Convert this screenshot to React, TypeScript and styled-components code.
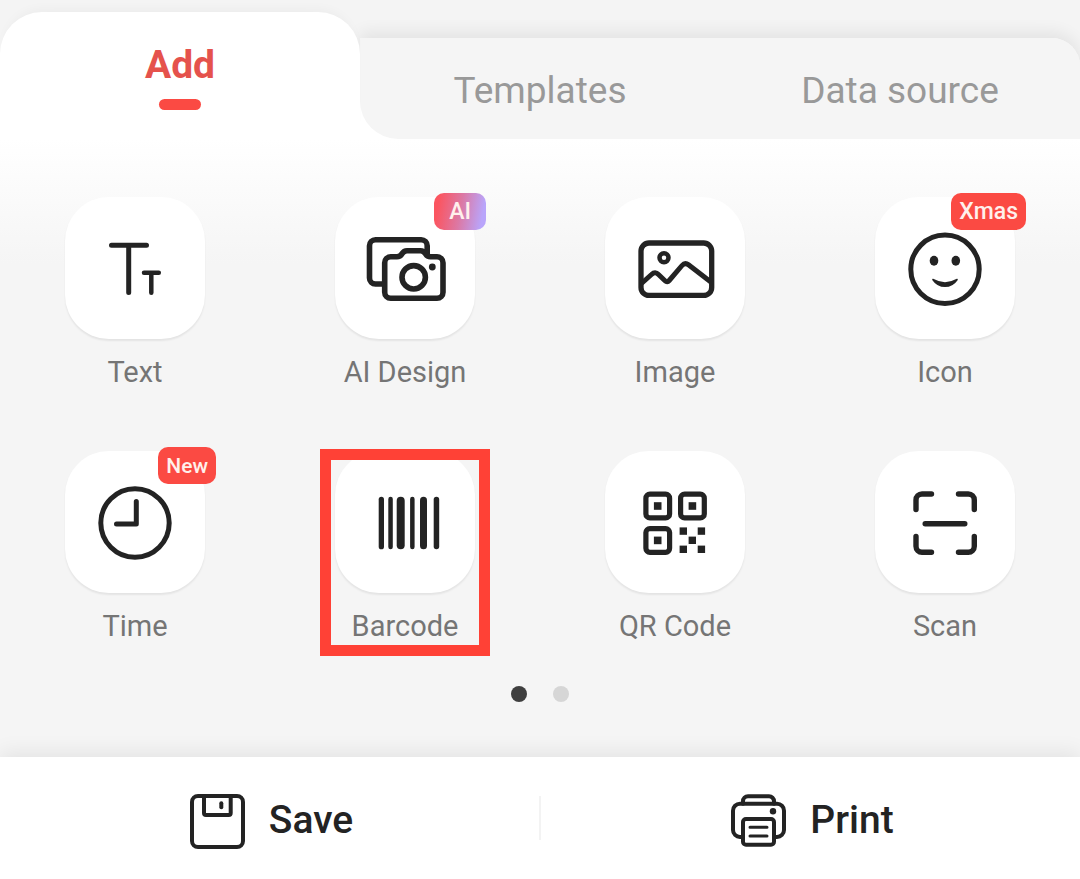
import React, { useState } from "react";
import styled, { createGlobalStyle, css } from "styled-components";

const ink = "#232323";
const surface = "#f5f5f5";
const accent = "#fb4a43";

const GlobalStyle = createGlobalStyle`
  *, *::before, *::after { box-sizing: border-box; }
  body {
    margin: 0;
    background: ${surface};
    font-family: Roboto, "Liberation Sans", sans-serif;
  }
  button {
    margin: 0;
    padding: 0;
    border: 0;
    background: none;
    font: inherit;
    color: inherit;
    cursor: pointer;
  }
`;

const Page = styled.div`
  display: flex;
  flex-direction: column;
  min-height: 100vh;
`;

const TabBar = styled.nav`
  display: grid;
  grid-template-columns: 1fr 2fr;
  background: #f4f4f4;
`;

const ActiveTab = styled.button`
  position: relative;
  z-index: 1;
  display: flex;
  flex-direction: column;
  align-items: center;
  gap: 12px;
  margin-top: 12px;
  padding: 31px 0 29px;
  border-radius: 42px 42px 0 0;
  background: #fff;
  box-shadow: 0 -8px 12px -6px rgba(0, 0, 0, 0.04);
  color: #e5524c;
  font-size: 39px;
  font-weight: 700;
  line-height: 44px;

  &::after {
    content: "";
    width: 42px;
    height: 11px;
    border-radius: 6px;
    background: ${accent};
  }
`;

const InactiveBacking = styled.div`
  margin-top: 38px;
  border-radius: 0 28px 0 0;
  background: linear-gradient(${surface} 50%, #fff 50%);
  box-shadow: 0 -6px 16px rgba(0, 0, 0, 0.07);
`;

const InactiveTabs = styled.div`
  display: grid;
  grid-template-columns: 1fr 1fr;
  height: 100%;
  border-radius: 0 28px 0 38px;
  background: ${surface};
`;

const InactiveTab = styled.button`
  padding-top: 4px;
  color: #999;
  font-size: 37px;
  line-height: 44px;
`;

const Panel = styled.main`
  position: relative;
  z-index: 1;
  flex: 1;
  display: flex;
  flex-direction: column;
  align-items: center;
  gap: 43px;
  padding: 58px 0 55px;
  background: linear-gradient(#fff 0, ${surface} 125px);
`;

const ToolGrid = styled.div`
  display: grid;
  grid-template-columns: repeat(4, 1fr);
  row-gap: 62px;
  justify-items: center;
  width: 100%;
`;

const Tool = styled.button<{ $framed?: boolean }>`
  position: relative;
  display: flex;
  flex-direction: column;
  align-items: center;
  gap: 16px;
  width: 140px;

  ${(p) =>
    p.$framed &&
    css`
      &::after {
        content: "";
        position: absolute;
        inset: -2px -15px -13px;
        border: 11px solid #ff4136;
      }
    `}
`;

const Tile = styled.span`
  display: flex;
  align-items: center;
  justify-content: center;
  width: 140px;
  height: 142px;
  padding-top: 2px;
  border-radius: 44px;
  background: #fff;
  box-shadow: 0 2px 2px rgba(0, 0, 0, 0.07);
`;

const ToolLabel = styled.span`
  color: #757575;
  font-size: 29px;
  line-height: 34px;
  white-space: nowrap;
`;

const Badge = styled.span<{ $gradient?: boolean; $small?: boolean }>`
  position: absolute;
  top: -4px;
  right: -11px;
  padding: 1px ${(p) => (p.$gradient ? 15 : 8)}px 0;
  border-radius: 10px;
  background: ${(p) =>
    p.$gradient ? "linear-gradient(100deg, #fb5560 10%, #dc78a4 50%, #b9a5fb 90%)" : accent};
  color: #fff0ec;
  font-size: ${(p) => (p.$small ? 21 : 23)}px;
  font-weight: 500;
  line-height: 36px;
`;

const Dots = styled.div`
  display: flex;
  gap: 26px;
`;

const Dot = styled.button<{ $on?: boolean }>`
  width: 16px;
  height: 16px;
  border-radius: 50%;
  background: ${(p) => (p.$on ? "#3f3f3f" : "#d6d6d6")};
`;

const ActionBar = styled.footer`
  position: relative;
  z-index: 2;
  display: grid;
  grid-template-columns: 1fr 2px 1fr;
  align-items: center;
  background: #fff;
  box-shadow: 0 -4px 20px rgba(0, 0, 0, 0.08);
`;

const Divider = styled.span`
  height: 44px;
  background: #f3f3f3;
`;

const Action = styled.button`
  display: flex;
  align-items: flex-start;
  justify-content: center;
  gap: 23px;
  padding: 36px 0 30px 4px;
  color: ${ink};
  font-size: 39px;
  font-weight: 500;
  line-height: 54px;
`;

const Glyph = styled.svg`
  display: block;
  fill: none;
  stroke: ${ink};
  stroke-width: 5;
  stroke-linecap: round;
  stroke-linejoin: round;

  .solid {
    fill: ${ink};
    stroke: none;
  }
`;

const ToolGlyph = ({ children }: { children: React.ReactNode }) => (
  <Glyph width="100" height="100" viewBox="0 0 100 100" aria-hidden="true">
    {children}
  </Glyph>
);

const TextIcon = () => (
  <ToolGlyph>
    <path d="M26.5 26.3H61.5M43.7 26.3V73.5" />
    <path d="M59 53.7H73.8M66.3 53.7V73.8" strokeWidth="4.5" />
  </ToolGlyph>
);

const CameraIcon = () => (
  <ToolGlyph>
    <g strokeWidth="5.6">
      <path d="M29 65H20.5a6 6 0 0 1-6-6V26.7a6 6 0 0 1 6-6H66.2a6 6 0 0 1 6 6V35" />
      <path d="M35.7 37.8H42c2.6 0 3.6-.7 5-3c1.4-2.3 2.6-3.1 5-3.1H65.5c2.4 0 3.6.8 5 3.1c1.4 2.3 2.4 3 5 3H82a6 6 0 0 1 6 6V73.3a6 6 0 0 1-6 6H35.7a6 6 0 0 1-6-6V43.8a6 6 0 0 1 6-6Z" />
      <circle cx="58.7" cy="58.3" r="11.7" />
    </g>
    <circle className="solid" cx="77.3" cy="48" r="3.4" />
  </ToolGlyph>
);

const ImageIcon = () => (
  <ToolGlyph>
    <rect x="16" y="24" width="70.7" height="52.4" rx="8" strokeWidth="5.3" />
    <circle cx="39" cy="38.7" r="4.5" strokeWidth="4.5" />
    <path d="M17 64L26.5 55.5Q30.2 52 33.5 55.5L40 61.7Q42.2 63.8 44.2 61.5L57 46.5Q60 43 63.5 45.8L86.5 63.5" />
  </ToolGlyph>
);

const SmileIcon = () => (
  <ToolGlyph>
    <circle cx="50" cy="50.3" r="34.2" />
    <ellipse className="solid" cx="39" cy="41.8" rx="4.3" ry="5" />
    <ellipse className="solid" cx="60.8" cy="41.8" rx="4.3" ry="5" />
    <path
      className="solid"
      d="M38.2 59.8Q50 66.5 61.8 59.8Q63.4 59.6 62.6 61.2Q58 68 50 68Q42 68 37.4 61.2Q36.6 59.6 38.2 59.8Z"
    />
  </ToolGlyph>
);

const ClockIcon = () => (
  <ToolGlyph>
    <circle cx="50" cy="50" r="34.2" />
    <path d="M51.3 28.5V51H31.5" />
  </ToolGlyph>
);

const bars = [
  [23.7, 5.3],
  [33.3, 4.5],
  [41.7, 8],
  [55.1, 4.5],
  [65, 7],
  [78.7, 5.5],
];

const BarcodeIcon = () => (
  <ToolGlyph>
    {bars.map(([x, w]) => (
      <rect key={x} className="solid" x={x} y="23.7" width={w} height="52.6" rx={w / 2} />
    ))}
  </ToolGlyph>
);

const finders = [
  [18.3, 18.6],
  [53, 18.6],
  [18.3, 53],
];
const modules = [
  [54.6, 54.4],
  [72.7, 54.4],
  [63.6, 63.6],
  [54.6, 72.6],
  [72.7, 72.6],
];

const QrIcon = () => (
  <ToolGlyph>
    {finders.map(([x, y]) => (
      <g key={`${x}-${y}`}>
        <rect x={x + 2.6} y={y + 2.6} width="23.7" height="23.7" rx="4" strokeWidth="5.2" />
        <rect className="solid" x={x + 10.6} y={y + 10.6} width="7.6" height="7.6" />
      </g>
    ))}
    {modules.map(([x, y]) => (
      <rect key={`${x}-${y}`} className="solid" x={x} y={y} width="7.4" height="7.4" />
    ))}
  </ToolGlyph>
);

const ScanIcon = () => (
  <ToolGlyph>
    <g strokeWidth="5.4">
      <path d="M36.5 21H27a6 6 0 0 0-6 6V36.5M63.5 21H73.3a6 6 0 0 1 6 6V36.5M21 63.5V73.3a6 6 0 0 0 6 6H36.5M79.3 63.5V73.3a6 6 0 0 1-6 6H63.5" />
      <path d="M30.2 50.7H69.8" />
    </g>
  </ToolGlyph>
);

const SaveIcon = () => (
  <Glyph width="56" height="56" viewBox="0 0 56 56" aria-hidden="true">
    <g strokeWidth="4">
      <rect x="2" y="3" width="51" height="51" rx="6" />
      <path d="M14 3V20a2 2 0 0 0 2 2H38.7a2 2 0 0 0 2-2V3" />
      <path d="M31.3 10.3V14.3" />
    </g>
  </Glyph>
);

const PrintIcon = () => (
  <Glyph width="56" height="56" viewBox="0 0 56 56" aria-hidden="true">
    <g strokeWidth="4">
      <path d="M12 44H9a7 7 0 0 1-7-7V17.700a7 7 0 0 1 7-7H46a7 7 0 0 1 7 7V37a7 7 0 0 1-7 7H43" />
      <path d="M12 10.7V8.300a5 5 0 0 1 5-5H38a5 5 0 0 1 5 5V10.7" />
      <rect x="12" y="26" width="31" height="25.7" rx="3" />
      <path d="M19 34.3H36M19 43H36" strokeWidth="3" />
    </g>
    <circle className="solid" cx="42" cy="18.3" r="3.2" />
  </Glyph>
);

type ToolItem = {
  label: string;
  Icon: () => React.ReactElement;
  badge?: string;
  gradient?: boolean;
  small?: boolean;
  framed?: boolean;
};

const tools: ToolItem[] = [
  { label: "Text", Icon: TextIcon },
  { label: "AI Design", Icon: CameraIcon, badge: "AI", gradient: true },
  { label: "Image", Icon: ImageIcon },
  { label: "Icon", Icon: SmileIcon, badge: "Xmas" },
  { label: "Time", Icon: ClockIcon, badge: "New", small: true },
  { label: "Barcode", Icon: BarcodeIcon, framed: true },
  { label: "QR Code", Icon: QrIcon },
  { label: "Scan", Icon: ScanIcon },
];

export default function App() {
  const [page, setPage] = useState(0);

  return (
    <Page>
      <GlobalStyle />
      <TabBar>
        <ActiveTab aria-current="page">Add</ActiveTab>
        <InactiveBacking>
          <InactiveTabs>
            <InactiveTab>Templates</InactiveTab>
            <InactiveTab>Data source</InactiveTab>
          </InactiveTabs>
        </InactiveBacking>
      </TabBar>
      <Panel>
        <ToolGrid>
          {tools.map(({ label, Icon, badge, gradient, small, framed }) => (
            <Tool key={label} $framed={framed}>
              <Tile>
                <Icon />
              </Tile>
              <ToolLabel>{label}</ToolLabel>
              {badge && (
                <Badge $gradient={gradient} $small={small}>
                  {badge}
                </Badge>
              )}
            </Tool>
          ))}
        </ToolGrid>
        <Dots>
          {[0, 1].map((i) => (
            <Dot key={i} $on={page === i} aria-label={`Page ${i + 1}`} onClick={() => setPage(i)} />
          ))}
        </Dots>
      </Panel>
      <ActionBar>
        <Action>
          <SaveIcon />
          Save
        </Action>
        <Divider />
        <Action>
          <PrintIcon />
          Print
        </Action>
      </ActionBar>
    </Page>
  );
}
